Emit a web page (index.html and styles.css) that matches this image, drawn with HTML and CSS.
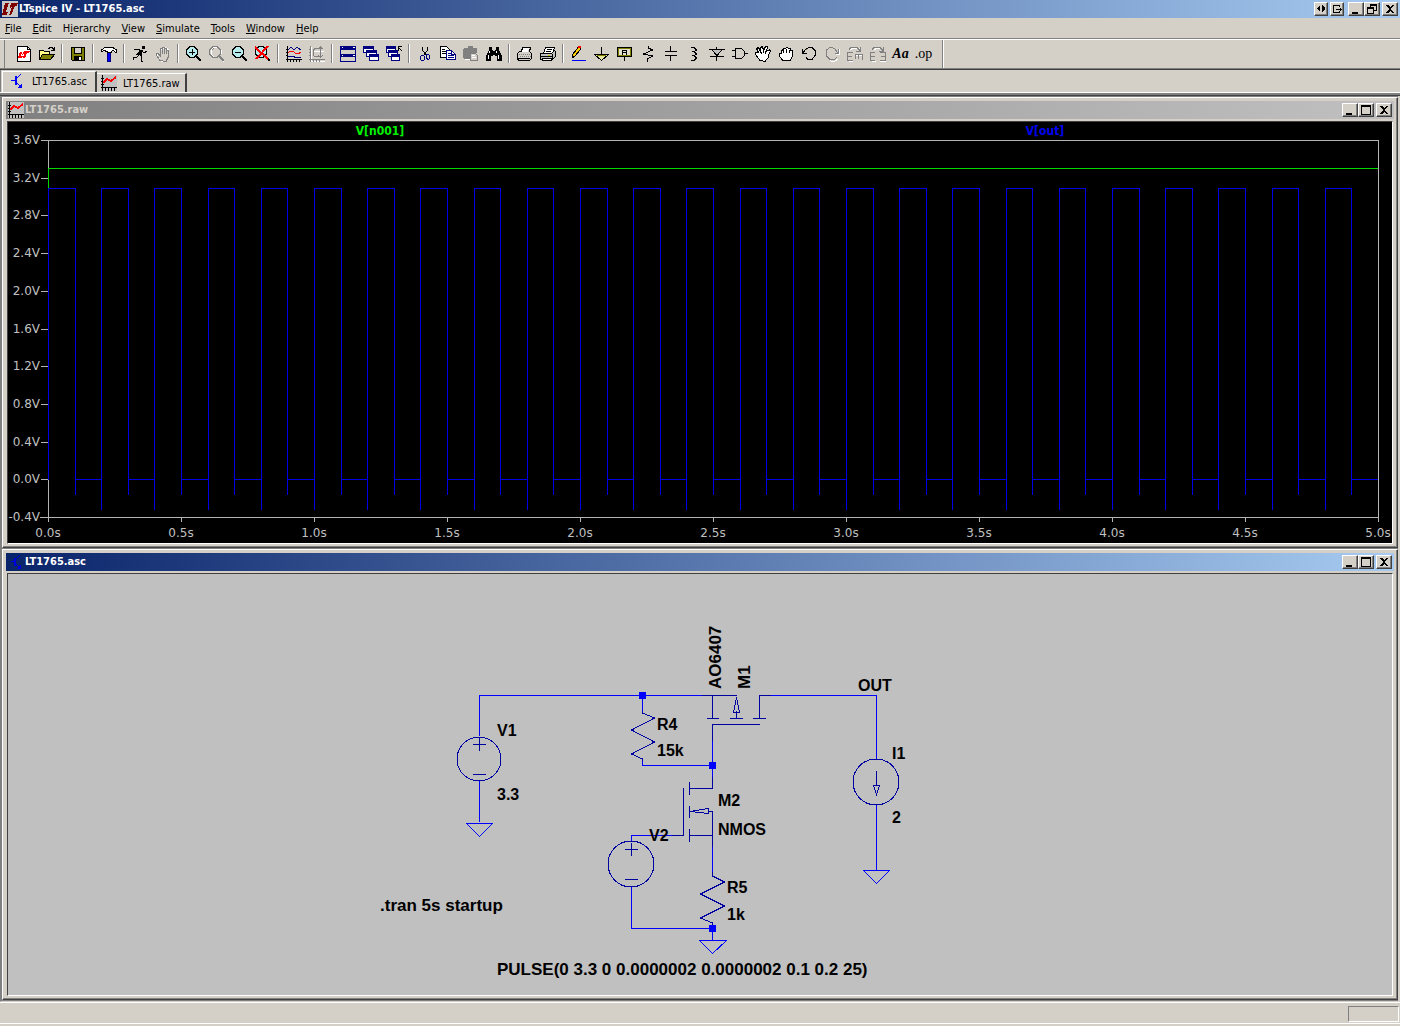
FILE: index.html
```html
<!DOCTYPE html>
<html lang="en">
<head>
  <meta charset="UTF-8">
  <meta name="viewport" content="width=device-width, initial-scale=1.0">
  <title>LTspice IV - LT1765.asc</title>
  <link rel="stylesheet" href="styles.css">
</head>
<body>
  <div class="app">
    <header class="titlebar">
      <svg class="logo" viewBox="0 0 16 16"><path fill="#c8c8c8" d="M0 0h16v16H0z"/><path fill="#800000" d="M3 2h4L4 11h2l-1 3H0zM9 2h7l-1 3h-2l-4 9H7l3-8-2 1z"/></svg>
      <h1>LTspice IV - LT1765.asc</h1>
      <div class="win-buttons">
        <button class="small" aria-label="Move to other screen"><svg viewBox="0 0 12 10"><path d="M5 1v7L2 5V4zM7 1v7l3-3V4z"/></svg></button>
        <button class="small gap" aria-label="Send to screen"><svg viewBox="0 0 12 10"><path class="l" d="M8.500 3V1.500h-6v7h6V7M5 5.500h6M9.500 4v3"/></svg></button>
        <button aria-label="Minimize"><svg viewBox="0 0 12 10"><path d="M2 8h6v2H2z"/></svg></button>
        <button class="gap-sm" aria-label="Restore"><svg viewBox="0 0 12 10"><path d="M4 0h7v7H8V6h2V2H5v1H4zM1 3h7v7H1zM2 5v4h5V5z" fill-rule="evenodd"/></svg></button>
        <button aria-label="Close"><svg viewBox="0 0 12 10"><path d="M2 1h2l2 2 2-2h2L7 5l3 4H8L6 7 4 9H2l3-4z"/></svg></button>
      </div>
    </header>

    <nav class="menu">
      <button><u>F</u>ile</button>
      <button><u>E</u>dit</button>
      <button>H<u>i</u>erarchy</button>
      <button><u>V</u>iew</button>
      <button><u>S</u>imulate</button>
      <button><u>T</u>ools</button>
      <button><u>W</u>indow</button>
      <button><u>H</u>elp</button>
    </nav>

    <div class="toolbar">
      <button aria-label="New schematic"><svg viewBox="0 0 16 16"><path fill="#fff" stroke="#000" d="M1.500.500h10l3 3v12h-13z"/><path class="l" d="M11.500.500v3h3"/><path fill="red" d="M4 6h2l-1 4h2l-1 2H2zM8 5h6l-1 2h-2l-2 5H7l1-4-2 1z"/></svg></button>
      <button aria-label="Open"><svg viewBox="0 0 16 16"><path fill="#ff8" stroke="#000" d="M.500 13.500v-9h4l1 1h5v3"/><path fill="#808000" stroke="#000" d="M.500 13.500l3-5h12l-4 5z"/><path class="l" d="M9 2.500h1l1-1h2l2 2M15.500 1v3H12"/></svg></button>
      <i class="sep"></i>
      <button aria-label="Save"><svg viewBox="0 0 16 16"><path fill="#808000" stroke="#000" d="M1.500 1.500h13v13h-12l-1-1z"/><path fill="#d4d0c8" stroke="#000" d="M4.500 1.500h7v6h-7z"/><path d="M4 10h8v5H4z"/><path fill="#fff" d="M9 11h2v3H9z"/></svg></button>
      <i class="sep"></i>
      <button aria-label="Control panel"><svg viewBox="0 0 16 16"><path fill="#00f" stroke="#000080" d="M6.500 6.500h3v9h-3z"/><path fill="#fff" stroke="#000" d="M.500 5.500V4l3-2.500h8l3.500 2v3l-3-2-2 1v1h-4v-1l-3-1z"/></svg></button>
      <i class="sep"></i>
      <button aria-label="Run"><svg viewBox="0 0 16 16"><path d="M10 0h3v3h-3zM7 4h4l-1 5-3-1z"/><path class="l" d="M2 3.500h5l3 2 2 1 3-1M8 5L5.500 8H4M8 8l2 3-1 4M8 8l-3 3H1M9 4L6 9M2 12l-1 2M9 15h2"/></svg></button>
      <button aria-label="Halt" disabled><svg viewBox="0 0 16 16"><path class="hi" d="M6 15l-4-5V8l3 1V3h1V2h2V1h2v1h2v1h1v8l-2 5z"/><path class="g" d="M5 14.500L1.500 9V7.500H3l2 2v-7h2v5-6h2v6-5h2v5-3h2v7l-2 4z"/></svg></button>
      <i class="sep"></i>
      <button aria-label="Zoom area"><svg viewBox="0 0 16 16"><path fill="#b8ecec" stroke="#000" d="M4 .500h4L11.500 4v4L8 11.500H4L.500 8V4z"/><path class="l" d="M3 6h6M6 3v6"/><path class="w" d="M10 10l5 5"/></svg></button>
      <button aria-label="Pan" disabled><svg viewBox="0 0 16 16"><path class="hi" d="M5 1h4l3 3v4l-3 3H5L2 8V4zM11 12l4 4"/><path class="g" d="M4 .500h4L11.500 4v4L8 11.500H4L.500 8V4zM3 4l2-2"/><path fill="none" stroke="#808080" stroke-width="2" d="M10 10l5 5"/></svg></button>
      <button aria-label="Zoom back"><svg viewBox="0 0 16 16"><path fill="#b8ecec" stroke="#000" d="M4 .500h4L11.500 4v4L8 11.500H4L.500 8V4z"/><path class="l" d="M3 6h6"/><path class="w" d="M10 10l5 5"/></svg></button>
      <button aria-label="Zoom full extents"><svg viewBox="0 0 16 16"><path fill="#b8ecec" stroke="#000" d="M4 .500h4L11.500 4v4L8 11.500H4L.500 8V4z"/><path class="w" d="M10 10l5 5"/><path fill="none" stroke="red" stroke-width="2" d="M0 1l13 12M13 0L1 13"/></svg></button>
      <i class="sep"></i>
      <button aria-label="Autorange"><svg viewBox="0 0 16 16"><path class="l" d="M1.500 0v16M0 13.500h16M0 3.500h2M0 6.500h2M0 9.500h2M4.500 13v3M7.500 13v3M10.500 13v3M13.500 13v3"/><path class="n" d="M2 4l3-3 3 3 3-3 4 3M2 10.500h6l1 1h6"/><path fill="none" stroke="red" d="M2 7l2-1.500h3L9 7l3 .500 3-1"/></svg></button>
      <button aria-label="Plot settings" disabled><svg viewBox="0 0 16 16"><path class="hi" d="M2.500 1v14.500H16M5 5h10"/><path class="g" d="M1.500 0v16M0 13.500h16M0 3.500h2M0 6.500h2M0 9.500h2M4.500 13v3M7.500 13v3M10.500 13v3M11.500 1v10M9 3l2.500-2L14 3M9 9l2.500 2L14 9M4 4.500l2-2h8M4 4.500v5l2 1h7"/></svg></button>
      <i class="sep"></i>
      <button aria-label="Tile windows"><svg viewBox="0 0 16 16"><path class="n" d="M.500.500h15v15H.500z"/><path fill="#000080" d="M0 0h16v4H0zM0 8h16v3H0z"/><path fill="#fff" d="M2 1h1v1H2zM13 1h2v1h-2zM2 9h1v1H2zM13 9h2v1h-2z"/></svg></button>
      <button aria-label="Cascade windows"><svg viewBox="0 0 16 16"><path fill="#fff" stroke="#000080" d="M.500.500h10v6H.500zM3.500 4.500h10v6h-10zM6.500 8.500h9v6h-9z"/><path fill="#000080" d="M0 0h11v3H0zM3 4h11v3H3zM6 8h10v3H6z"/></svg></button>
      <button aria-label="Close all windows"><svg viewBox="0 0 16 16"><path fill="#fff" stroke="#000080" d="M.500.500h9v6h-9zM2.500 4.500h9v6h-9zM5.500 8.500h8v6h-8z"/><path fill="#000080" d="M0 0h10v3H0zM2 4h10v3H2zM5 8h9v3H5z"/><path class="l" d="M12 4.500V.500h4M12 1l4 4"/></svg></button>
      <i class="sep"></i>
      <button aria-label="Cut"><svg viewBox="0 0 16 16"><path class="l" d="M5.500 1v3l4 6M10.500 1v3l-4 6"/><path class="n" d="M4.500 9.500h2l1 1v3l-1 1h-2l-1-1v-3zM9.500 8.500h2l1 1v3l-1 1h-1l-1-2z"/></svg></button>
      <button aria-label="Copy"><svg viewBox="0 0 16 16"><path fill="#fff" stroke="#000" d="M.500.500h6l3 3v8h-9z"/><path class="l" d="M2 3.500h3M2 5.500h4M2 7.500h4"/><path fill="#fff" stroke="#000080" d="M6.500 4.500h5l4 4v5h-9z"/><path class="n" d="M8 7.500h3M8 9.500h6M8 11.500h6M11.500 5v3h3"/></svg></button>
      <button aria-label="Paste" disabled><svg viewBox="0 0 16 16"><path class="hi" d="M2 13.500h5M16 8v8H7"/><path fill="#808080" d="M1 2h4V0h5v2h4v5H7v6H1L0 12V3z"/><path fill="#d4d0c8" stroke="#808080" d="M7.500 7.500h5l2 2v5h-7z"/><path class="hi" d="M9 9.500h3M9 11.500h4"/></svg></button>
      <button aria-label="Find"><svg viewBox="0 0 16 16"><path d="M3 1h3v2l1 2h2l1-2V1h3v3l3 6v5h-5v-5H9V9H7v1H5v5H0v-5l3-6z"/><path fill="#fff" d="M3 5h1v2H3zM2 9h1v4H2zM10 5h1v2h-1zM12 9h1v4h-1z"/></svg></button>
      <i class="sep"></i>
      <button aria-label="Print setup"><svg viewBox="0 0 16 16"><path fill="#d4d0c8" stroke="#000" d="M4.500 5.500l1-4h8l-1 4 2 2v5l-2 2h-11l-1-2v-5l2-2z"/><path fill="#fff" d="M6 2h6l-1 4H5z"/><path stroke="#808080" stroke-dasharray="1" d="M2 8.500h12M3 10.500h12"/><path class="l" d="M1 12.500h12"/></svg></button>
      <button aria-label="Print"><svg viewBox="0 0 16 16"><path fill="#fff" stroke="#000" d="M3.500 7.500l2-6h9l-2 6z"/><path class="l" d="M7 3.500h5M6 5.500h5"/><path fill="#c0c0c0" stroke="#000" d="M.500 7.500h11l3-3 1 1v5l-3 3h-12z"/><path fill="#fff" stroke="#000" d="M2.500 12.500h9v2h-9z"/><path class="l" d="M1 10.500h11M12.500 8v5"/><path fill="#cc0" d="M8 9h2v1H8z"/></svg></button>
      <i class="sep"></i>
      <button aria-label="Wire"><svg viewBox="0 0 16 16"><path fill="#fc0" stroke="#000" d="M7.500.500h2v3l-6 7-2 1v-3l5-6z"/><path fill="red" d="M7 0h3v2H7z"/><path stroke="#00f" d="M1 14.500h14"/></svg></button>
      <button aria-label="Ground"><svg viewBox="0 0 16 16"><path class="l" d="M7.500 1v7"/><path fill="#e8e8a0" stroke="#000" d="M.500 8.500h14l-7 6z"/><path stroke="#808000" d="M3 9.500h9"/></svg></button>
      <button aria-label="Label net"><svg viewBox="0 0 16 16"><path fill="#e4e0d0" stroke="#000" d="M.500 1.500h14v9H.500z"/><path fill="none" stroke="#808000" d="M1.500 2.500h12v7h-12z"/><path class="l" d="M5.500 9V5l1-1h2l1 1v4M5 6.500h5M7.500 11v4"/></svg></button>
      <button aria-label="Resistor"><svg viewBox="0 0 16 16"><path class="l" d="M8.500 0v2l4 2-9 4 9 2-5 3v3"/></svg></button>
      <button aria-label="Capacitor"><svg viewBox="0 0 16 16"><path class="l" d="M2 5.500h12M2 9.500h12M7.500 0v5M7.500 10v5"/></svg></button>
      <button aria-label="Inductor"><svg viewBox="0 0 16 16"><path class="l" d="M5 1.500h3l2 2v1l-2 1H6h2l2 2v1l-2 1H6h2l2 2v1l-2 2H5"/></svg></button>
      <button aria-label="Diode"><svg viewBox="0 0 16 16"><path fill="#c0c0c0" stroke="#000" d="M2.500 3.500h11L8 9.500z"/><path class="l" d="M0 3.500h16M1 10.500h14M7.500 1v2M7.500 10v5"/></svg></button>
      <button aria-label="Component"><svg viewBox="0 0 16 16"><path class="l" d="M0 4.500h3M0 10.500h3M13 7.500h3"/><path fill="#d4d0c8" stroke="#000" d="M3.500 2.500h6l3 3v4l-3 3h-6z"/></svg></button>
      <button aria-label="Move"><svg viewBox="0 0 16 16"><path fill="#fff" stroke="#000" d="M5 14.500L.500 8.500v-2h3l-2-4 2-1 2 4V1.500l2-1 1 4 2-4h2l-1 5 3-2 1 2-2 3v3l-3 3v1z"/><path class="l" d="M5 5l2 3M8 4v3M10 5v3"/></svg></button>
      <button aria-label="Drag"><svg viewBox="0 0 16 16"><path fill="#fff" stroke="#000" d="M5 14.500l-3.500-4v-3h2v-3l2-1v-1h2l1-1h1l1 1h2v2h2v6l-2 3v1z"/><path class="l" d="M5.500 4v3M8 3v4M11 4v3"/></svg></button>
      <button aria-label="Undo"><svg viewBox="0 0 16 16"><path fill="none" stroke="#808000" d="M5 3.500l3-2h2l3 2"/><path class="l" d="M1.500 3v4h4M2 7l3-4 3-1.500h3l3 3v5l-3 4H7l-2-2"/></svg></button>
      <button aria-label="Redo" disabled><svg viewBox="0 0 16 16"><path class="hi" d="M15.500 3v5h-4M14 13l-3 2H7l-4-4"/><path class="g" d="M14.500 3v4h-4M14 7l-3-4-3-1.500H6l-4 3v5l4 4h4l3-2"/></svg></button>
      <button aria-label="Rotate" disabled><svg viewBox="0 0 16 16"><path class="hi" d="M3 4l3-2h6l2 3M1.500 15.500H6M9 9.500h7"/><path class="g" d="M2 3.500l2-2h6l3 3M13.500 1v4H9M6 6.500H.500v8H6M1 10.500h4M8 8.500h7v5M8.500 8v5M11.500 9v4"/></svg></button>
      <button aria-label="Mirror" disabled><svg viewBox="0 0 16 16"><path class="hi" d="M4 4l3-2h4l3 3M1.500 15.500H6M10 15.500h6"/><path class="g" d="M2 3.500l2-2h6l3 3M13.500 1v4H9M5 6.500H.500v8H5M1 10.500h4M10 6.500h5v8h-5M11 10.500h4"/></svg></button>
      <button class="text-tool" aria-label="Text">Aa</button>
      <button class="op-tool" aria-label="SPICE directive">.op</button>
      <i class="sep end"></i>
    </div>

    <div class="tabs">
      <button class="tab active"><svg class="ico" viewBox="0 0 16 16"><path fill="none" stroke="#00f" stroke-width="2" d="M6 3v9"/><path fill="none" stroke="#00f" d="M1 7.500h5M6 6l5-5M6 9l5 5"/><path fill="#00f" d="M12 10v5H7z"/></svg>LT1765.asc</button>
      <button class="tab"><svg class="ico" viewBox="0 0 16 16"><path fill="#c0c0c0" d="M0 0h16v16H0z"/><path class="l" d="M1.500 0v16M0 12.500h16M0 3.500h3M0 6.500h3M0 9.500h3M4.500 12v4M7.500 12v4M10.500 12v4M13.500 12v4"/><path fill="none" stroke="red" stroke-width="2" d="M2 8l4-4 4 2 5-4"/></svg>LT1765.raw</button>
    </div>

    <main class="mdi">
      <section class="child">
        <div class="titlebar inactive">
          <svg class="logo" viewBox="0 0 16 16"><path fill="#c0c0c0" d="M0 0h16v16H0z"/><path class="l" d="M1.500 0v16M0 12.500h16M0 3.500h3M0 6.500h3M0 9.500h3M4.500 12v4M7.500 12v4M10.500 12v4M13.500 12v4"/><path fill="none" stroke="red" stroke-width="2" d="M2 8l4-4 4 2 5-4"/></svg>
          <h2>LT1765.raw</h2>
          <div class="win-buttons">
            <button aria-label="Minimize"><svg viewBox="0 0 12 10"><path d="M2 8h6v2H2z"/></svg></button>
            <button class="gap-sm" aria-label="Maximize"><svg viewBox="0 0 12 10"><path d="M1 0h10v10H1zM2 2v7h8V2z" fill-rule="evenodd"/></svg></button>
            <button aria-label="Close"><svg viewBox="0 0 12 10"><path d="M2 1h2l2 2 2-2h2L7 5l3 4H8L6 7 4 9H2l3-4z"/></svg></button>
          </div>
        </div>
        <svg class="plot" viewBox="8 122 1384 421">
          <defs>
            <!-- five periods of the pulse, one second -->
            <path id="pulse" d="M48.500 510V188.500h27V495M75 479.500h26M101.500 510V188.500h27V495M128 479.500h26M154.500 510V188.500h27V495M181 479.500h27M208.500 510V188.500h26V495M234 479.500h27M261.500 510V188.500h26V495M287 479.500h27"/>
          </defs>
          <path class="axis" d="M48 140.500h1331M48.500 140v382M1378.500 140v382M40 517.500h1339M41 140.500h7M41 178.500h7M41 215.500h7M41 253.500h7M41 291.500h7M41 329.500h7M41 366.500h7M41 404.500h7M41 442.500h7M41 479.500h7M181.500 517v5M314.500 517v5M447.500 517v5M580.500 517v5M713.500 517v5M846.500 517v5M979.500 517v5M1112.500 517v5M1245.500 517v5"/>
          <g class="v-out">
            <use href="#pulse"/>
            <use href="#pulse" x="266"/>
            <use href="#pulse" x="532"/>
            <use href="#pulse" x="798"/>
            <use href="#pulse" x="1064"/>
          </g>
          <path class="axis" d="M48.500 480v40"/>
          <path class="v-in" d="M48.500 188v-19.500H1378"/>
          <g class="volts">
            <text x="40" y="144">3.6V</text>
            <text x="40" y="182">3.2V</text>
            <text x="40" y="219">2.8V</text>
            <text x="40" y="257">2.4V</text>
            <text x="40" y="295">2.0V</text>
            <text x="40" y="333">1.6V</text>
            <text x="40" y="370">1.2V</text>
            <text x="40" y="408">0.8V</text>
            <text x="40" y="446">0.4V</text>
            <text x="40" y="483">0.0V</text>
            <text x="40" y="521">-0.4V</text>
          </g>
          <g class="times">
            <text x="48" y="537">0.0s</text>
            <text x="181" y="537">0.5s</text>
            <text x="314" y="537">1.0s</text>
            <text x="447" y="537">1.5s</text>
            <text x="580" y="537">2.0s</text>
            <text x="713" y="537">2.5s</text>
            <text x="846" y="537">3.0s</text>
            <text x="979" y="537">3.5s</text>
            <text x="1112" y="537">4.0s</text>
            <text x="1245" y="537">4.5s</text>
            <text x="1378" y="537">5.0s</text>
          </g>
          <text class="trace green" x="380" y="135">V[n001]</text>
          <text class="trace blue" x="1045" y="135">V[out]</text>
        </svg>
      </section>

      <section class="child grow">
        <div class="titlebar">
          <svg class="logo" viewBox="0 0 16 16"><path fill="none" stroke="#00d" stroke-width="2" d="M7 4v8"/><path fill="none" stroke="#00d" d="M3 7.500h4M7 6l5-5M7 9l5 5"/><path fill="#00d" d="M13 10v5H8z"/></svg>
          <h2>LT1765.asc</h2>
          <div class="win-buttons">
            <button aria-label="Minimize"><svg viewBox="0 0 12 10"><path d="M2 8h6v2H2z"/></svg></button>
            <button class="gap-sm" aria-label="Maximize"><svg viewBox="0 0 12 10"><path d="M1 0h10v10H1zM2 2v7h8V2z" fill-rule="evenodd"/></svg></button>
            <button aria-label="Close"><svg viewBox="0 0 12 10"><path d="M2 1h2l2 2 2-2h2L7 5l3 4H8L6 7 4 9H2l3-4z"/></svg></button>
          </div>
        </div>
        <svg class="schematic" viewBox="8 574 1384 421">
          <!-- wires -->
          <path class="wire" d="M479.500 736v-40.500h223M642.500 695v16M642.500 760v5.500h70M712.500 741v40M771 695.500h105.500V760M876.500 805v65M479.500 781v41M631.500 842v-6.500H672M631.500 886v42.500h81M712.500 845v28M712.500 928v12"/>
          <!-- grounds -->
          <path class="wire" d="M466.500 823.500h26l-13 13zM863.500 870.500h26l-13 13zM699.500 940.500h27l-14 13z"/>
          <!-- V1, V2, I1 -->
          <g class="part">
            <circle cx="479" cy="759" r="22"/>
            <path d="M473 744.500h13M479.500 738v13M473 774.500h13"/>
            <circle cx="631" cy="864" r="23"/>
            <path d="M625 849.500h13M631.500 843v13M625 879.500h13"/>
            <circle cx="876" cy="782" r="23"/>
            <path d="M876.500 771v14M873.500 785.500h6l-3 9z"/>
          </g>
          <!-- R4, R5 -->
          <path class="part" d="M642.500 711v2l12 5-23 12 23 12-23 12 11 5v2M712.500 872v4l12 6-24 12 24 12-24 12 12 5v4"/>
          <!-- M1 -->
          <path class="part" d="M702 695.500h35M712.500 695v23M707 718.500h12M736.500 711v7M730 718.500h13M733.500 712.500h6l-3-15zM771 695.500h-11.500v23M753 718.500h13M760 724.500h-47.500V741"/>
          <!-- M2 -->
          <path class="part" d="M712.500 777v11.500h-23M689.500 782v13M683.500 788v47.500H672M689.500 806v12M690 811.500l18-3v5zM708 811.500h4.500V847M690 835.500h22M689.500 829v13"/>
          <path class="node" d="M639 692h7v7h-7zM709 762h7v7h-7zM709 925h7v7h-7z"/>
          <g class="labels">
            <text x="497" y="736">V1</text>
            <text x="497" y="800">3.3</text>
            <text x="657" y="730">R4</text>
            <text x="657" y="756">15k</text>
            <text x="718" y="806">M2</text>
            <text x="718" y="835">NMOS</text>
            <text x="649" y="841">V2</text>
            <text x="727" y="893">R5</text>
            <text x="727" y="920">1k</text>
            <text x="858" y="691">OUT</text>
            <text x="892" y="759">I1</text>
            <text x="892" y="823">2</text>
            <text class="big" transform="translate(721 689) rotate(-90)">AO6407</text>
            <text class="big" transform="translate(750 689) rotate(-90)">M1</text>
            <text class="big" x="380" y="911">.tran 5s startup</text>
            <text class="big" x="497" y="975">PULSE(0 3.3 0 0.0000002 0.0000002 0.1 0.2 25)</text>
          </g>
        </svg>
      </section>
    </main>

    <footer class="status"><div class="pane"></div></footer>
  </div>
</body>
</html>
```
FILE: styles.css
```css
* { box-sizing: border-box; }
body {
  margin: 0;
  padding-right: 4px;
  background: #fff;
  font-family: "DejaVu Sans Condensed", "DejaVu Sans", sans-serif;
  font-size: 11px;
  color: #000;
}
button {
  margin: 0;
  padding: 0;
  border: 0;
  background: none;
  font: inherit;
  color: inherit;
}
svg { display: block; }
.app {
  display: flex;
  flex-direction: column;
  min-height: 100vh;
  background: #d4d0c8;
}

/* title bars */
.titlebar {
  display: flex;
  align-items: center;
  height: 18px;
  padding: 0 2px;
  background: linear-gradient(to right, #0a246a, #a6caf0);
  color: #fff;
}
.titlebar.inactive {
  background: linear-gradient(to right, #808080, #c0c0c0);
  color: #d4d0c8;
}
.titlebar h1, .titlebar h2 {
  flex: 1;
  margin: 0;
  padding-left: 1px;
  font-size: 11px;
  line-height: 18px;
  font-weight: bold;
}
.logo, .ico {
  width: 16px;
  height: 16px;
  shape-rendering: crispEdges;
}
.win-buttons { display: flex; }
.win-buttons button {
  width: 16px;
  height: 14px;
  padding: 1px;
  background: #d4d0c8;
  border: 1px solid;
  border-color: #fff #404040 #404040 #fff;
  box-shadow: inset -1px -1px #808080;
}
.win-buttons .small { width: 14px; padding: 1px 0; }
.win-buttons .small:first-child { margin-right: 2px; }
.win-buttons .gap { margin-right: 4px; }
.win-buttons .gap-sm { margin-right: 2px; }
.win-buttons svg {
  width: 12px;
  height: 10px;
  shape-rendering: crispEdges;
}

/* menu */
.menu {
  display: flex;
  gap: 11px;
  height: 22px;
  padding: 0 5px;
  border-bottom: 1px solid #fff;
  box-shadow: inset 0 -1px #808080;
}

/* icon strokes */
.l { fill: none; stroke: #000; }
.w { fill: none; stroke: #000; stroke-width: 2; }
.n { fill: none; stroke: #000080; }
.g { fill: none; stroke: #808080; }
.hi { fill: none; stroke: #fff; }

.toolbar {
  display: flex;
  align-items: center;
  height: 30px;
  padding: 0 6px 2px 12px;
  border-bottom: 1px solid #404040;
  box-shadow: inset 0 -1px #808080, inset 4px 0 #d4d0c8, inset 5px 0 #808080;
}
.toolbar button {
  width: 23px;
  height: 22px;
  padding: 3px 4px;
}
.toolbar svg {
  width: 16px;
  height: 16px;
  shape-rendering: crispEdges;
}
.toolbar .sep {
  width: 2px;
  height: 19px;
  margin: 0 3px;
  border-left: 1px solid #808080;
  border-right: 1px solid #fff;
}
.toolbar .sep.end { height: 28px; margin-left: 7px; }
.toolbar .text-tool, .toolbar .op-tool {
  padding: 0;
  font-family: "Liberation Serif", serif;
  font-size: 14px;
  line-height: 22px;
  font-weight: bold;
  font-style: italic;
}
.toolbar .op-tool {
  font-weight: normal;
  font-style: normal;
}

/* document tabs */
.tabs {
  display: flex;
  align-items: flex-start;
  height: 26px;
  padding: 1px 2px 0;
  border-bottom: 1px solid #404040;
  box-shadow: inset 0 -2px #808080, inset 0 -3px #fff, inset 1px 0 #808080;
}
.tab {
  display: flex;
  align-items: center;
  gap: 6px;
  height: 19px;
  margin-top: 2px;
  padding: 0 5px 0 4px;
  border-top: 1px solid #fff;
  border-right: 2px solid #404040;
}
.tab.active {
  height: 21px;
  margin-top: 0;
  padding: 0 8px 2px 7px;
  border-left: 1px solid #fff;
}

/* windows */
.mdi {
  flex: 1;
  display: flex;
  flex-direction: column;
  gap: 1px;
  padding: 1px 0 1px 1px;
  margin-right: 2px;
  background: #808080;
  border-left: 1px solid #808080;
  border-bottom: 1px solid #d4d0c8;
}
.child {
  display: flex;
  flex-direction: column;
  padding: 3px;
  background: #d4d0c8;
  border: 1px solid;
  border-color: #fff #404040 #404040 #fff;
  box-shadow: inset -1px -1px #808080;
}
.child.grow { flex: 1; }
.plot, .schematic {
  width: calc(100% - 2px);
  height: auto;
  margin: 2px 1px 0;
  border: 1px solid;
  border-color: #404040 #fff #fff #404040;
  shape-rendering: crispEdges;
}
.plot { background: #000; }
.schematic {
  flex: 1 0 auto;
  background: #c0c0c0;
}

/* waveforms */
.axis { fill: none; stroke: #b4b4b4; }
.v-out { fill: none; stroke: #0000e0; }
.v-in { fill: none; stroke: #00d800; }
.volts, .times {
  font-family: "DejaVu Sans", sans-serif;
  font-size: 12px;
  fill: #c0c0c0;
}
.volts { text-anchor: end; }
.times { text-anchor: middle; }
.trace {
  font-size: 12px;
  font-weight: bold;
  text-anchor: middle;
}
.green { fill: #00f000; }
.blue { fill: #0000f0; }

/* circuit */
.wire { fill: none; stroke: #0000ff; }
.part { fill: none; stroke: #0000a0; }
.node { fill: #0000ff; }
.labels {
  font-family: "Liberation Sans", sans-serif;
  font-size: 16px;
  font-weight: bold;
}
.labels .big { font-size: 17px; }

.status {
  display: flex;
  justify-content: flex-end;
  height: 24px;
  padding: 3px 1px 2px;
  border-top: 1px solid #fff;
  border-bottom: 2px solid #d4d0c8;
  box-shadow: inset 0 -1px #fff;
}
.pane {
  width: 51px;
  border: 1px solid;
  border-color: #808080 #fff #fff #808080;
}
```
